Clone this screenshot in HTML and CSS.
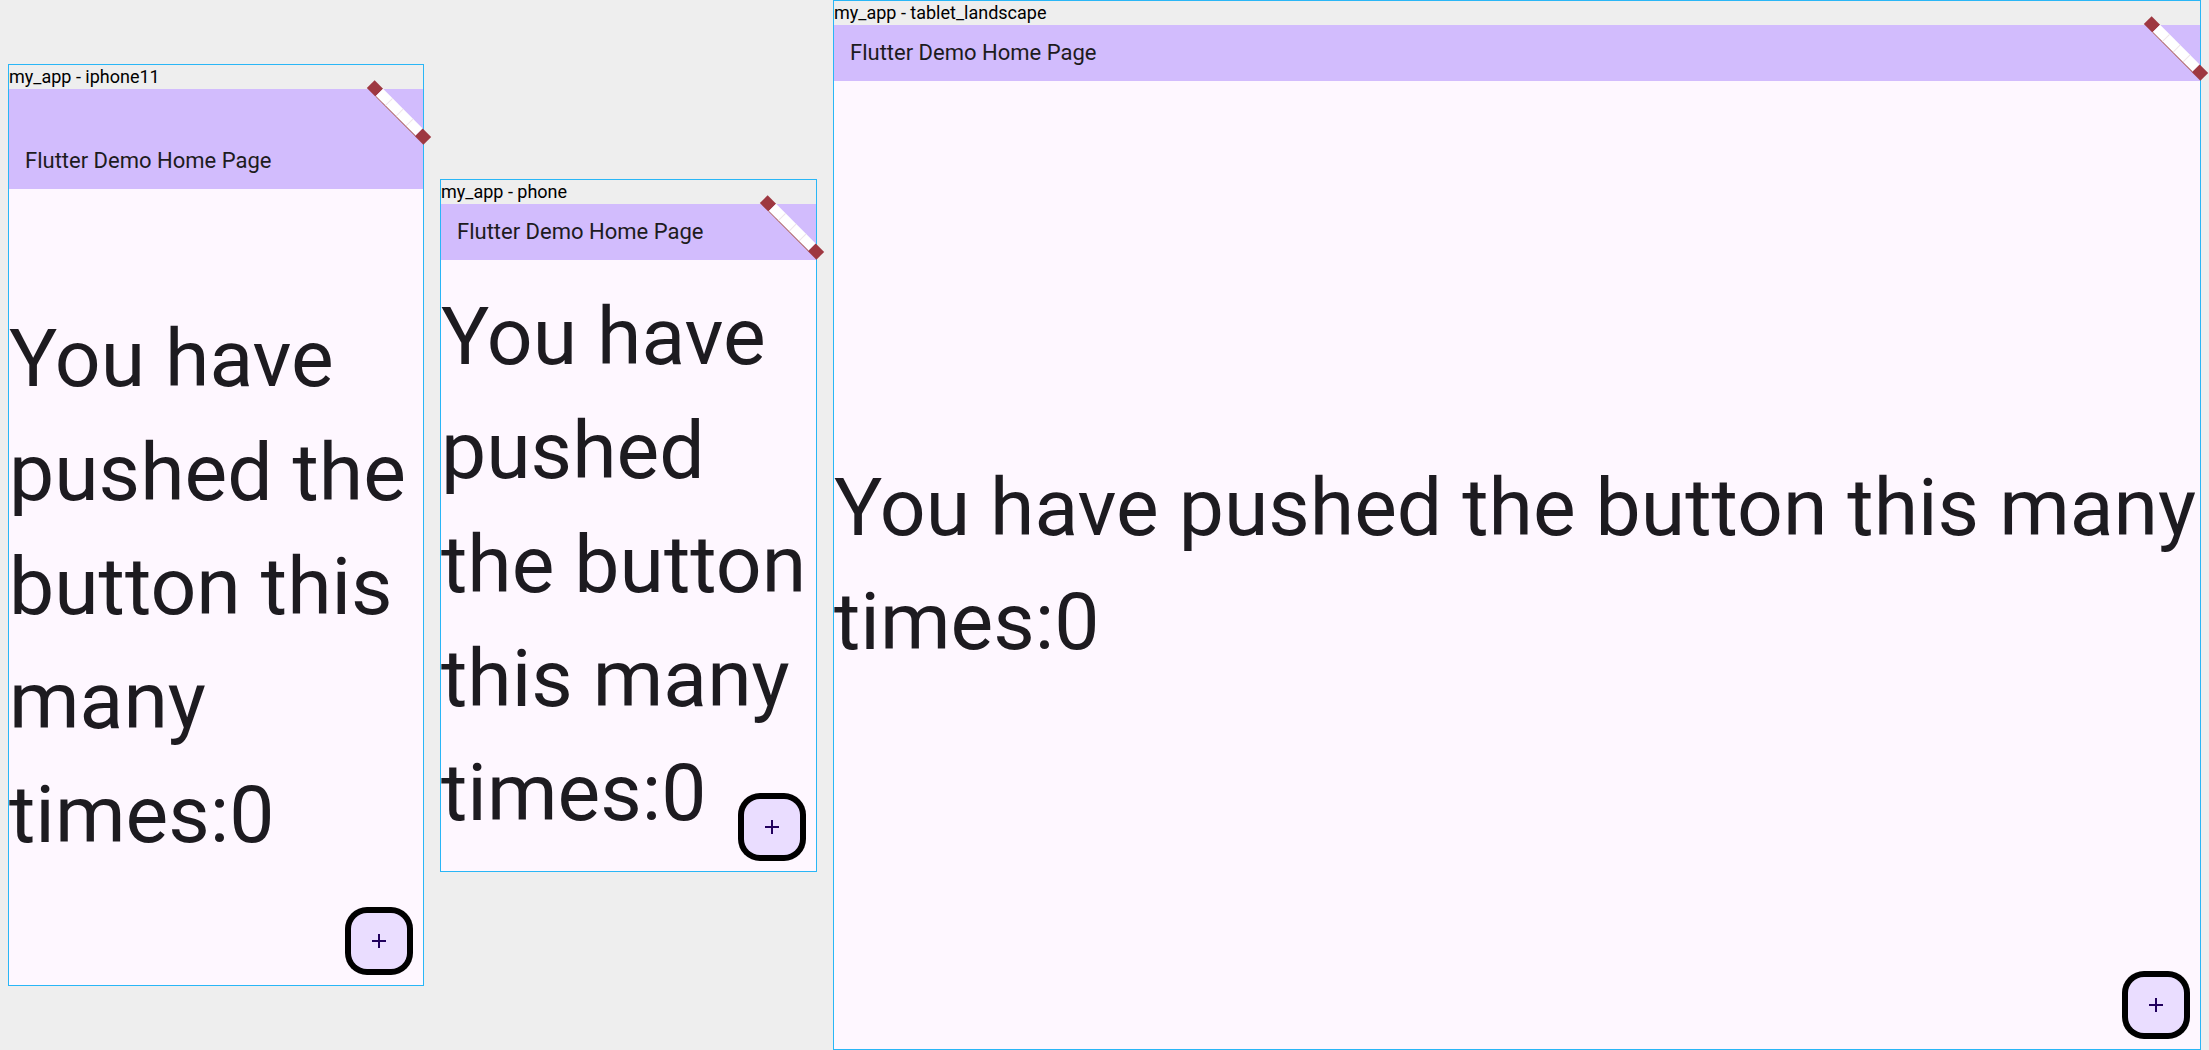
FILE: index.html
```html
<!DOCTYPE html>
<html>
<head>
<meta charset="utf-8">
<link rel="stylesheet" href="styles.css">
</head>
<body>
<div class="stage">
  <div class="frame">
    <div class="label">my_app - iphone11</div>
    <div class="device iphone">
      <header class="appbar notch"><span class="title">Flutter Demo Home Page</span></header>
      <main class="content"><p class="counter">You have pushed the button this many times:0</p></main>
      <button class="fab"><svg viewBox="0 0 24 24" width="24" height="24"><path d="M19 13h-6v6h-2v-6H5v-2h6V5h2v6h6v2z" fill="#21005d"/></svg></button>
      <div class="ribbon"><span class="end"></span><span class="mid"><i></i><i></i><i></i><i></i></span><span class="end"></span></div>
    </div>
  </div>
  <div class="frame">
    <div class="label">my_app - phone</div>
    <div class="device phone">
      <header class="appbar"><span class="title">Flutter Demo Home Page</span></header>
      <main class="content"><p class="counter">You have pushed the button this many times:0</p></main>
      <button class="fab"><svg viewBox="0 0 24 24" width="24" height="24"><path d="M19 13h-6v6h-2v-6H5v-2h6V5h2v6h6v2z" fill="#21005d"/></svg></button>
      <div class="ribbon"><span class="end"></span><span class="mid"><i></i><i></i><i></i><i></i></span><span class="end"></span></div>
    </div>
  </div>
  <div class="frame">
    <div class="label">my_app - tablet_landscape</div>
    <div class="device tablet">
      <header class="appbar"><span class="title">Flutter Demo Home Page</span></header>
      <main class="content"><p class="counter">You have pushed the button this many times:0</p></main>
      <button class="fab"><svg viewBox="0 0 24 24" width="24" height="24"><path d="M19 13h-6v6h-2v-6H5v-2h6V5h2v6h6v2z" fill="#21005d"/></svg></button>
      <div class="ribbon"><span class="end"></span><span class="mid"><i></i><i></i><i></i><i></i></span><span class="end"></span></div>
    </div>
  </div>
</div>
</body>
</html>
```
FILE: styles.css
```css
html, body {
  margin: 0;
  padding: 0;
}
body {
  background: #eeeeee;
  font-family: Roboto, "Liberation Sans", sans-serif;
  overflow: hidden;
}
.stage {
  width: 2209px;
  height: 1050px;
  display: flex;
  justify-content: center;
  align-items: center;
  gap: 16px;
  overflow: hidden;
}
.frame {
  border: 1px solid #29b6f6;
  background: #eeeeee;
  display: flex;
  flex-direction: column;
}
.label {
  height: 24px;
  font-size: 18px;
  line-height: 24px;
  color: #000;
  white-space: nowrap;
}
.device {
  position: relative;
  display: flex;
  flex-direction: column;
  background: #fef7ff;
}
.iphone { width: 414px; height: 896px; }
.phone { width: 375px; height: 667px; }
.tablet { width: 1366px; height: 1024px; }
.appbar {
  flex: none;
  height: 56px;
  background: #d2bcfd;
  display: flex;
  align-items: center;
  padding-left: 16px;
}
.appbar.notch {
  padding-top: 44px;
}
.title {
  font-size: 22px;
  color: #1d1b20;
  line-height: 28px;
}
.content {
  flex: 1;
  display: flex;
  flex-direction: column;
  justify-content: center;
  align-items: center;
  min-height: 0;
}
.counter {
  margin: 0;
  font-size: 80.5px;
  line-height: 114px;
  color: #1d1b20;
}
.fab {
  position: absolute;
  right: 16px;
  bottom: 16px;
  width: 56px;
  height: 56px;
  border: none;
  padding: 0;
  border-radius: 16px;
  background: #eaddff;
  box-shadow: 0 0 0 6px #000;
  display: flex;
  align-items: center;
  justify-content: center;
}
.fab svg { display: block; }
.ribbon {
  position: absolute;
  top: 18px;
  right: -16px;
  width: 80px;
  height: 11px;
  transform: rotate(45deg);
  display: flex;
  z-index: 5;
}
.ribbon .end {
  width: 12px;
  background: #9e3841;
}
.ribbon .mid {
  flex: 1;
  background: #ffffff;
  border-bottom: 1px solid #a85a66;
  display: flex;
}
.ribbon .mid i {
  flex: 1;
  border-right: 1px solid #eee6ea;
}
.ribbon .mid i:last-child { border-right: none; }
```
